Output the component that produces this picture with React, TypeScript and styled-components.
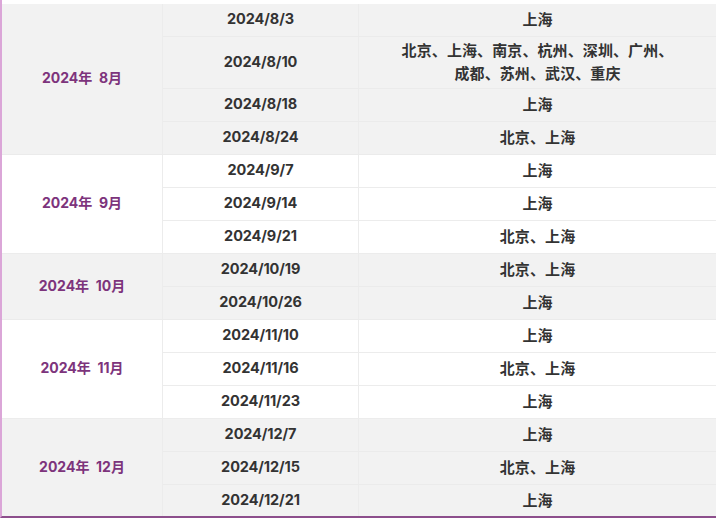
import React from "react";
import styled, { createGlobalStyle } from "styled-components";

const GlobalStyle = createGlobalStyle`
  html, body { margin: 0; padding: 0; background: #ffffff; }
  body { width: 716px; height: 518px; overflow: hidden; }
  * { box-sizing: border-box; }
`;

const Frame = styled.div`
  width: 716px;
  height: 518px;
  padding-top: 4px;
  border-left: 2px solid #dba6d8;
  border-bottom: 2px solid #8d4f8c;
  background: #ffffff;
  overflow: hidden;
`;

const Grid = styled.div`
  display: grid;
  grid-template-columns: 161px 196px 1fr;
  font-family: Inter, "Noto Sans CJK SC", sans-serif;
  color: #333333;
`;

const Cell = styled.div<{ $shade: boolean; $tall?: boolean; $last?: boolean }>`
  height: ${(p) => (p.$tall ? "52px" : "33px")};
  display: flex;
  align-items: center;
  justify-content: center;
  padding: 0 10px 3px;
  background: ${(p) => (p.$shade ? "#f2f2f2" : "#ffffff")};
  border-bottom: 1px solid ${(p) => (p.$shade ? "#ebebeb" : "#ececec")};
  border-right: ${(p) => (p.$last ? "none" : "1px solid #ececec")};
  text-align: center;
`;

const DateCell = styled(Cell)`
  grid-column: 2;
`;

const MonthCell = styled(Cell)<{ $span: number }>`
  grid-column: 1;
  grid-row: span ${(p) => p.$span};
  height: auto;
  color: #7d347c;
  font-size: 14px;
  font-weight: 700;
  padding-bottom: 4px;
`;

const Month = styled.span`
  font-family: Inter, "Noto Sans CJK SC", sans-serif;
`;

const DateText = styled.span`
  font-family: Inter, sans-serif;
  font-size: 14.5px;
  font-weight: 700;
  letter-spacing: -0.1px;
`;

const CityText = styled.span`
  font-family: "Noto Sans CJK SC", sans-serif;
  font-size: 15px;
  font-weight: 700;
  line-height: 23px;
  letter-spacing: 0.1px;
`;

const Line = styled.span`
  display: block;
`;

type Row = { date: string; cities: string[] };
type Group = { month: string; rows: Row[] };

const groups: Group[] = [
  {
    month: "2024年\u00a0 8月",
    rows: [
      { date: "2024/8/3", cities: ["上海"] },
      {
        date: "2024/8/10",
        cities: ["北京、上海、南京、杭州、深圳、广州、", "成都、苏州、武汉、重庆"],
      },
      { date: "2024/8/18", cities: ["上海"] },
      { date: "2024/8/24", cities: ["北京、上海"] },
    ],
  },
  {
    month: "2024年\u00a0 9月",
    rows: [
      { date: "2024/9/7", cities: ["上海"] },
      { date: "2024/9/14", cities: ["上海"] },
      { date: "2024/9/21", cities: ["北京、上海"] },
    ],
  },
  {
    month: "2024年\u00a0 10月",
    rows: [
      { date: "2024/10/19", cities: ["北京、上海"] },
      { date: "2024/10/26", cities: ["上海"] },
    ],
  },
  {
    month: "2024年\u00a0 11月",
    rows: [
      { date: "2024/11/10", cities: ["上海"] },
      { date: "2024/11/16", cities: ["北京、上海"] },
      { date: "2024/11/23", cities: ["上海"] },
    ],
  },
  {
    month: "2024年\u00a0 12月",
    rows: [
      { date: "2024/12/7", cities: ["上海"] },
      { date: "2024/12/15", cities: ["北京、上海"] },
      { date: "2024/12/21", cities: ["上海"] },
    ],
  },
];

export default function App() {
  return (
    <>
      <GlobalStyle />
      <Frame>
        <Grid>
          {groups.map((g, gi) => {
            const shade = gi % 2 === 0;
            return (
              <React.Fragment key={g.month}>
                <MonthCell $shade={shade} $span={g.rows.length}>
                  <Month>{g.month}</Month>
                </MonthCell>
                {g.rows.map((r) => {
                  const tall = r.cities.length > 1;
                  return (
                    <React.Fragment key={r.date}>
                      <DateCell $shade={shade} $tall={tall}>
                        <DateText>{r.date}</DateText>
                      </DateCell>
                      <Cell $shade={shade} $tall={tall} $last>
                        <CityText>
                          {r.cities.map((c) => (
                            <Line key={c}>{c}</Line>
                          ))}
                        </CityText>
                      </Cell>
                    </React.Fragment>
                  );
                })}
              </React.Fragment>
            );
          })}
        </Grid>
      </Frame>
    </>
  );
}
